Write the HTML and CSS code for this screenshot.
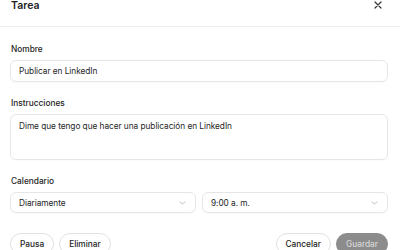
FILE: index.html
```html
<!DOCTYPE html>
<html lang="es">
<head>
    <meta charset="UTF-8">
    <title>Tarea</title>
    <link rel="stylesheet" href="styles.css">
</head>
<body>
    <div class="dialog">
        <div class="dialog-header">
            <h2 class="dialog-title">Tarea</h2>
            <span class="close-button">
                <svg width="8" height="8" viewBox="0 0 8 8"><path d="M1 1L7 7M7 1L1 7" stroke="#333" stroke-width="1.2" stroke-linecap="round"/></svg>
            </span>
        </div>

        <form class="dialog-body">
            <div class="form-group">
                <label>Nombre</label>
                <div class="field">Publicar en LinkedIn</div>
            </div>

            <div class="form-group">
                <label>Instrucciones</label>
                <div class="field field-area">Dime que tengo que hacer una publicación en LinkedIn</div>
            </div>

            <div class="form-group">
                <label>Calendario</label>
                <div class="select-row">
                    <div class="field select">
                        <span>Diariamente</span>
                        <svg class="chevron" width="7" height="4" viewBox="0 0 7 4"><path d="M1 1L3.5 3L6 1" stroke="#b5b5b5" stroke-width="0.9" fill="none" stroke-linecap="round"/></svg>
                    </div>
                    <div class="field select">
                        <span>9:00 a. m.</span>
                        <svg class="chevron" width="7" height="4" viewBox="0 0 7 4"><path d="M1 1L3.5 3L6 1" stroke="#b5b5b5" stroke-width="0.9" fill="none" stroke-linecap="round"/></svg>
                    </div>
                </div>
            </div>

            <div class="actions">
                <div class="actions-left">
                    <button type="button" class="pill-btn">Pausa</button>
                    <button type="button" class="pill-btn">Eliminar</button>
                </div>
                <div class="actions-right">
                    <button type="button" class="pill-btn">Cancelar</button>
                    <button type="submit" class="pill-btn save-btn">Guardar</button>
                </div>
            </div>
        </form>
    </div>
</body>
</html>
```

FILE: styles.css
```css
body {
    margin: 0;
    background: #fff;
    font-family: Inter, "Noto Sans", sans-serif;
    color: #1d1d1d;
}

.dialog {
    width: 400px;
}

.dialog-header {
    display: flex;
    justify-content: space-between;
    align-items: flex-start;
    height: 27px;
    padding: 0 18px 0 11px;
    border-bottom: 1px solid #efefef;
    box-sizing: border-box;
}

.dialog-title {
    margin: 0;
    font-size: 10.5px;
    font-weight: 600;
    line-height: 11px;
}

.close-button {
    margin-top: 1px;
    display: flex;
}

.dialog-body {
    padding: 17px 12px 0 10px;
}

.form-group {
    margin-bottom: 16px;
}

.form-group label {
    display: block;
    font-size: 8.3px;
    font-weight: 500;
    line-height: 11px;
    margin: 0 0 5px 1px;
}

.field {
    height: 22px;
    padding: 0 8px;
    display: flex;
    align-items: center;
    border: 1px solid #e6e6e6;
    border-radius: 6px;
    box-sizing: border-box;
    font-size: 8.3px;
    letter-spacing: -0.05px;
    color: #262626;
    box-shadow: 0 1px 1px rgba(0, 0, 0, 0.02);
}

.field-area {
    height: 46px;
    align-items: flex-start;
    padding-top: 6px;
}

.select-row {
    display: grid;
    grid-template-columns: 1fr 1fr;
    gap: 6px;
}

.select {
    height: 21px;
    justify-content: space-between;
    padding-right: 9px;
}

.actions {
    display: flex;
    justify-content: space-between;
    margin-top: 20px;
}

.actions-left,
.actions-right {
    display: flex;
    gap: 5px;
}

.pill-btn {
    height: 22px;
    padding: 0 9px;
    border: 1px solid #e2e2e2;
    border-radius: 11px;
    background: #fff;
    color: #1d1d1d;
    font-family: inherit;
    font-size: 8.3px;
    font-weight: 500;
}

.save-btn {
    background: #8c8c8c;
    border-color: #8c8c8c;
    color: #d6d6d6;
}
```
